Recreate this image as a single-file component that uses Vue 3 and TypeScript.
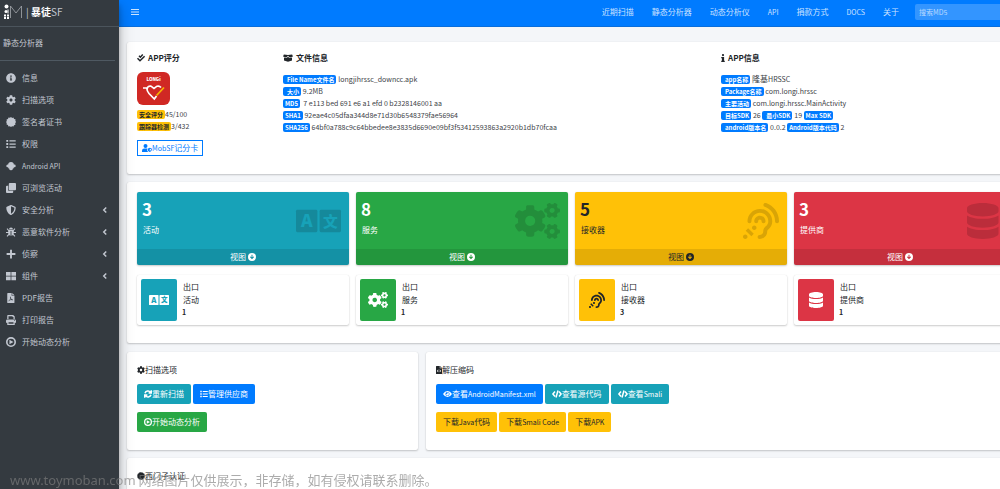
<script setup lang="ts">
import { h } from 'vue'

type Glyph = { box: string; d: string; stroke?: number }

const gear =
  'M512.1 191l-8.2 14.3c-3 5.3-9.4 7.5-15.1 5.4-11.8-4.4-22.6-10.7-32.1-18.6-4.6-3.8-5.8-10.5-2.8-15.7l8.2-14.3c-6.9-8-12.3-17.3-15.9-27.4h-16.5c-6 0-11.2-4.3-12.2-10.3-2-12-2.1-24.6 0-37.1 1-6 6.2-10.4 12.2-10.4h16.5c3.6-10.1 9-19.4 15.9-27.4l-8.2-14.3c-3-5.2-1.9-11.9 2.8-15.7 9.5-7.9 20.4-14.2 32.1-18.6 5.7-2.1 12.1.1 15.1 5.4l8.2 14.3c10.5-1.9 21.2-1.9 31.7 0L552 6.3c3-5.3 9.4-7.5 15.1-5.4 11.8 4.4 22.6 10.7 32.1 18.6 4.6 3.8 5.8 10.5 2.8 15.7l-8.2 14.3c6.9 8 12.3 17.3 15.9 27.4h16.5c6 0 11.2 4.3 12.2 10.3 2 12 2.1 24.6 0 37.1-1 6-6.2 10.4-12.2 10.4h-16.5c-3.6 10.1-9 19.4-15.9 27.4l8.2 14.3c3 5.2 1.9 11.9-2.8 15.7-9.5 7.9-20.4 14.2-32.1 18.6-5.7 2.1-12.1-.1-15.1-5.4l-8.2-14.3c-10.4 1.9-21.2 1.9-31.7 0zm-10.5-58.8c38.5 29.6 82.4-14.3 52.8-52.8-38.5-29.7-82.4 14.3-52.8 52.8z'
const bigGear =
  'M386.3 286.1l33.7 16.8c10.1 5.8 14.5 18.1 10.5 29.1-8.9 24.2-26.4 46.4-42.6 65.8-7.4 8.9-20.2 11.1-30.3 5.3l-29.1-16.8c-16 13.7-34.6 24.6-54.9 31.7v33.6c0 11.6-8.3 21.6-19.7 23.6-24.6 4.2-50.4 4.4-75.9 0-11.5-2-20-11.9-20-23.6V418c-20.3-7.2-38.9-18-54.9-31.7L74 403c-10 5.8-22.9 3.6-30.3-5.3-16.2-19.4-33.3-41.6-42.2-65.7-4-10.9.4-23.2 10.5-29.1l33.3-16.8c-3.9-20.9-3.9-42.4 0-63.4L12 205.8c-10.1-5.8-14.6-18.1-10.5-29 8.9-24.2 26-46.4 42.2-65.8 7.4-8.9 20.2-11.1 30.3-5.3l29.1 16.8c16-13.7 34.6-24.6 54.9-31.7V57.1c0-11.5 8.2-21.5 19.6-23.5 24.6-4.2 50.5-4.4 76-.1 11.5 2 20 11.9 20 23.6v33.6c20.3 7.2 38.9 18 54.9 31.7l29.1-16.8c10-5.8 22.9-3.6 30.3 5.3 16.2 19.4 33.2 41.6 42.1 65.8 4 10.9.1 23.2-10 29.1l-33.7 16.8c3.9 21 3.9 42.5 0 63.5zm-117.6 21.1c59.2-77-28.7-164.9-105.7-105.7-59.2 77 28.7 164.9 105.7 105.7z'

const glyphs: Record<string, Glyph> = {
  info: { box: '0 0 512 512', d: 'M256 8C119 8 8 119 8 256s111 248 248 248 248-111 248-248S393 8 256 8zm0 110c23.2 0 42 18.8 42 42s-18.8 42-42 42-42-18.8-42-42 18.8-42 42-42zm56 254c0 6.6-5.4 12-12 12h-88c-6.6 0-12-5.4-12-12v-24c0-6.6 5.4-12 12-12h12v-64h-12c-6.6 0-12-5.4-12-12v-24c0-6.6 5.4-12 12-12h64c6.6 0 12 5.4 12 12v100h12c6.6 0 12 5.4 12 12v24z' },
  cog: { box: '0 0 512 512', d: 'M487.4 315.7l-42.6-24.6c4.3-23.2 4.3-47 0-70.2l42.6-24.6c4.9-2.8 7.1-8.6 5.5-14-11.1-35.6-30-67.8-54.7-94.6-3.8-4.1-10-5.1-14.8-2.3L380.8 110c-17.9-15.4-38.5-27.3-60.8-35.1V25.8c0-5.6-3.9-10.5-9.4-11.7-36.7-8.2-74.3-7.8-109.2 0-5.5 1.2-9.4 6.1-9.4 11.7V75c-22.2 7.9-42.8 19.8-60.8 35.1L88.7 85.5c-4.9-2.8-11-1.9-14.8 2.3-24.7 26.7-43.6 58.9-54.7 94.6-1.7 5.4.6 11.2 5.5 14L67.3 221c-4.3 23.2-4.3 47 0 70.2l-42.6 24.6c-4.9 2.8-7.1 8.6-5.5 14 11.1 35.6 30 67.8 54.7 94.6 3.8 4.1 10 5.1 14.8 2.3l42.6-24.6c17.9 15.4 38.5 27.3 60.8 35.1v49.2c0 5.6 3.9 10.5 9.4 11.7 36.7 8.2 74.3 7.8 109.2 0 5.5-1.2 9.4-6.1 9.4-11.7v-49.2c22.2-7.9 42.8-19.8 60.8-35.1l42.6 24.6c4.9 2.8 11 1.9 14.8-2.3 24.7-26.7 43.6-58.9 54.7-94.6 1.5-5.5-.7-11.3-5.6-14.1zM256 336c-44.1 0-80-35.9-80-80s35.9-80 80-80 80 35.9 80 80-35.9 80-80 80z' },
  cogs: { box: '0 0 640 512', d: gear + bigGear + gear.replace('M512.1 191', 'M512.1 489.9').replace('L552 6.3', 'L552 305.2') },
  certificate: { box: '0 0 16 16', d: 'M8 0l1.8 1.5L11.9.9l1 2.1 2.3.7-.2 2.3L16 8l-1.3 1.9.4 2.3-2.2.8-.9 2.2-2.3-.3L8 16l-1.8-1.300-2.300.4-.8-2.200-2.200-.900.3-2.300L0 8l1.300-1.800-.4-2.300 2.200-.8.9-2.200 2.300.3z' },
  list: { box: '0 0 16 16', d: 'M.5 1.5h3v3h-3zM5.5 2h10v2h-10zM.5 6.5h3v3h-3zM5.5 7h10v2h-10zM.5 11.5h3v3h-3zM5.5 12h10v2h-10z' },
  android: { box: '0 0 16 16', d: 'M3.500 5.500Q3.500 1.500 8 1.500T12.500 5.500H13.500Q15.500 5.500 15.500 7.800T13.500 10H12.700Q12.700 12.200 10.700 12.200V13Q10.700 14.700 8 14.700T5.300 13V12.200Q3.300 12.200 3.300 10H2.500Q.5 10 .5 7.800T2.500 5.500z' },
  clone: { box: '0 0 16 16', d: 'M6 0h8.500Q16 0 16 1.500V10q0 1.500-1.500 1.500H6Q4.500 11.500 4.500 10V1.500Q4.500 0 6 0zM1.500 4.500h2V11q0 1.500 1.500 1.500h6.500v2Q11.500 16 10 16H1.500Q0 16 0 14.500V6Q0 4.500 1.500 4.500z' },
  shield: { box: '0 0 512 512', d: 'M466.500 83.700l-192-80a48.150 48.150 0 0 0-36.900 0l-192 80C27.700 91.100 16 108.600 16 128c0 198.500 114.500 335.700 221.500 380.300 11.800 4.900 25.100 4.900 36.900 0C360.100 472.600 496 349.300 496 128c0-19.400-11.700-36.900-29.500-44.300zM256.100 446.300l-.1-381 175.900 73.300c-3.300 151.400-82.100 261.100-175.800 307.700z' },
  bug: { box: '0 0 16 16', d: 'M4.800 3.800a3.200 3.200 0 0 1 6.400 0zM1 3.200L2.200 2l2.500 2.600h6.600L13.800 2 15 3.200l-2.500 2.600v2H16v1.700h-3.500q0 1-.4 1.800l2.900 2.900-1.200 1.200-2.700-2.600q-1 .9-2.400 1.100V6.500H7.300v7.400q-1.400-.2-2.400-1.100l-2.700 2.600L1 14.200l2.900-2.900q-.4-.8-.4-1.800H0V7.800h3.500v-2z' },
  plus: { box: '0 0 16 16', d: 'M6.500 1h3v5.500H15v3H9.500V15h-3V9.500H1v-3h5.500z' },
  grid: { box: '0 0 16 16', d: 'M0 1.500h7.400v6H0zM8.600 1.500H16v6H8.600zM0 8.600h7.400v6H0zM8.600 8.600H16v6H8.600z' },
  pdf: { box: '0 0 16 16', d: 'M2 1q0-1 1-1h6v4.500h4.500V15q0 1-1 1H3q-1 0-1-1zM10 0l3.500 3.500H10zM7 5.500Q6.200 6 7 8.200 6.300 10 5.300 11.400q-2 1-1.300 1.800 1 .5 2-1.500l2.500-.7q2 1 2.800.3.300-1.300-2-1.300Q8.300 9.300 7.900 8q.6-2.300-.9-2.500zM7.500 9l.9 1.200-1.700.5z' },
  print: { box: '0 0 16 16', d: 'M2 1q0-1 1-1h8.500L14 2.500V6.500h-2V3.300h-1.500V2H4v4.500H2zM2 7h12q2 0 2 2v3.500h-2V16H2v-3.500H0V9q0-2 2-2zM4 11.500V14h8v-2.500zM13 8.400v1.200h1.200V8.400z' },
  play: { box: '0 0 16 16', d: 'M8 0a8 8 0 1 0 0 16A8 8 0 1 0 8 0zM8 2.600a5.400 5.400 0 1 1 0 10.800A5.400 5.400 0 1 1 8 2.600zM5.500 4.300v7.400L12 8z' },
  left: { box: '0 0 16 16', d: 'M10.500 3L5.500 8l5 5', stroke: 3 },
  bars: { box: '0 0 16 16', d: 'M0 3h16M0 8h16M0 13h16', stroke: 2 },
  checks: { box: '0 0 16 16', d: 'M4 3.500l2.700 2.800L11.500 1M1 8.500L6 13.500 15.200 4.500', stroke: 3 },
  boxOpen: { box: '0 0 20 16', d: 'M1.800 1L10 2.200 18.200 1 20 5l-6.500 1.800L10 3.300 6.500 6.800 0 5zM2 6.800l5.200 1.400L10 5.300l2.800 2.900L18 6.800v6.400L10 15.500 2 13.200z' },
  infoMark: { box: '0 0 8 16', d: 'M4 0a2.200 2.200 0 1 1 0 4.400A2.200 2.200 0 1 1 4 0zM.5 5.800h5.700v7.500h1.300V16H.5v-2.700h1.300V8.500H.5z' },
  userShield: { box: '0 0 20 16', d: 'M7 0a4 4 0 1 1 0 8A4 4 0 1 1 7 0zM0 16v-2.500Q0 9 4.500 9h5.700v2.500q0 3 2.300 4.500zM15.500 7.500L20 9.300q0 4.700-4.500 6.700Q11 14 11 9.300zM15.500 9.300v4.900q2.600-1.500 2.800-3.900z' },
  sync: { box: '0 0 16 16', d: 'M2 6.500a6.200 6.200 0 0 1 11-1.800M14.500.5v5.400H9.200M14 9.500a6.200 6.200 0 0 1-11 1.800M1.500 15.500v-5.400h5.300', stroke: 3 },
  eye: { box: '0 0 18 16', d: 'M9 2q5.500 0 9 6-3.500 6-9 6T0 8q3.500-6 9-6zM9 3.800a4.200 4.200 0 1 0 0 8.400 4.200 4.200 0 1 0 0-8.400zM9 5.200A2.800 2.800 0 1 1 6.300 7.500 1.300 1.300 0 0 0 8.500 5.300z' },
  code: { box: '0 0 20 16', d: 'M6 3L1.800 8 6 13M14 3l4.200 5L14 13M12 1L8 15', stroke: 3 },
  fileCode: { box: '0 0 12 16', d: 'M0 1q0-1 1-1h6.500v4.500H12V15q0 1-1 1H1q-1 0-1-1zM8.500 0L12 3.500H8.500zM4.200 7L1.800 9.800l2.400 2.800 1-1-1.600-1.800 1.600-1.800zM7.800 7l-1 1 1.600 1.800-1.600 1.800 1 1 2.400-2.800z' },
  down: { box: '0 0 16 16', d: 'M8 0a8 8 0 1 0 0 16A8 8 0 1 0 8 0zM7 3.500h2v5.200l2-1.900 1.300 1.300L8 12.500 3.700 8.100 5 6.800l2 1.900z' },
  ear: { box: '0 0 512 512', d: 'M216 260c0 15.464-12.536 28-28 28s-28-12.536-28-28c0-44.112 35.888-80 80-80s80 35.888 80 80c0 15.464-12.536 28-28 28s-28-12.536-28-28c0-13.234-10.767-24-24-24s-24 10.766-24 24zm24-176c-97.047 0-176 78.953-176 176 0 15.464 12.536 28 28 28s28-12.536 28-28c0-66.168 53.832-120 120-120s120 53.832 120 120c0 75.164-71.009 70.311-71.997 143.622L288 404c0 28.673-23.327 52-52 52-15.464 0-28 12.536-28 28s12.536 28 28 28c59.475 0 107.876-48.328 108-107.774.595-34.428 72-48.24 72-144.226 0-97.047-78.953-176-176-176zm-80 236c-17.673 0-32 14.327-32 32s14.327 32 32 32 32-14.327 32-32-14.327-32-32-32zM32 448c-17.673 0-32 14.327-32 32s14.327 32 32 32 32-14.327 32-32-14.327-32-32-32zm480-187.993c0-1.518-.012-3.025-.045-4.531C510.076 140.525 436.157 38.47 327.994 1.511c-14.633-4.998-30.549 2.809-35.55 17.442-5 14.633 2.81 30.549 17.442 35.55 85.906 29.354 144.61 110.513 146.077 201.953l.003.188c.026 1.118.033 2.236.033 3.363 0 15.464 12.536 28 28 28s28.001-12.536 28.001-28zM152.971 439.029l-80-80L39.03 392.97l80 80 33.941-33.941z' },
  database: { box: '0 0 448 512', d: 'M448 73.143v45.714C448 159.143 347.667 192 224 192S0 159.143 0 118.857V73.143C0 32.857 100.333 0 224 0s224 32.857 224 73.143zM448 176v102.857C448 319.143 347.667 352 224 352S0 319.143 0 278.857V176c48.125 33.143 136.208 48.572 224 48.572S399.874 209.143 448 176zm0 160v102.857C448 479.143 347.667 512 224 512S0 479.143 0 438.857V336c48.125 33.143 136.208 48.572 224 48.572S399.874 369.143 448 336z' },
}

const Icon = (props: { name: string }) => {
  const attrs = { viewBox: '0 0 640 512', class: 'icon', 'aria-hidden': 'true' }
  if (props.name === 'language') {
    const word = { fill: 'var(--tone)', 'font-weight': 900, 'text-anchor': 'middle' }
    return h('svg', attrs, [
      h('rect', { x: 0, y: 96, width: 304, height: 320, rx: 20 }),
      h('rect', { x: 336, y: 96, width: 304, height: 320, rx: 20 }),
      h('text', { ...word, 'font-size': 250, x: 152, y: 348 }, 'A'),
      h('text', { ...word, 'font-size': 210, x: 488, y: 335 }, '文'),
    ])
  }
  const g = glyphs[props.name]
  const paint = g.stroke
    ? { fill: 'none', stroke: 'currentColor', 'stroke-width': g.stroke }
    : { 'fill-rule': 'evenodd' }
  return h('svg', { ...attrs, viewBox: g.box }, [h('path', { d: g.d, ...paint })])
}
Icon.props = ['name']

const menu = [
  { icon: 'info', text: '信息' },
  { icon: 'cog', text: '扫描选项' },
  { icon: 'certificate', text: '签名者证书' },
  { icon: 'list', text: '权限' },
  { icon: 'android', text: 'Android API', latin: true },
  { icon: 'clone', text: '可浏览活动' },
  { icon: 'shield', text: '安全分析', more: true },
  { icon: 'bug', text: '恶意软件分析', more: true },
  { icon: 'plus', text: '侦察', more: true },
  { icon: 'grid', text: '组件', more: true },
  { icon: 'pdf', text: 'PDF报告' },
  { icon: 'print', text: '打印报告' },
  { icon: 'play', text: '开始动态分析' },
]
const links = [
  { text: '近期扫描' },
  { text: '静态分析器' },
  { text: '动态分析仪' },
  { text: 'API', latin: true },
  { text: '捐款方式' },
  { text: 'DOCS', latin: true },
  { text: '关于' },
]
const fileRows = [
  { label: 'File Name文件名', value: 'longjihrssc_downcc.apk', wide: true },
  { label: '大小', value: '9.2MB', wide: true },
  { label: 'MD5', value: '\u00a07 e113 bed 691 e6 a1 efd 0 b2328146001 aa' },
  { label: 'SHA1', value: '92eae4c05dfaa344d8e71d30b6548379fae56964' },
  { label: 'SHA256', value: '64bf0a788c9c64bbedee8e3835d6690e09bf3f53412593863a2920b1db70fcaa' },
]
const appRows = [
  [{ label: 'app名称', han: '隆基', value: 'HRSSC', wide: true }],
  [{ label: 'Package名称', value: 'com.longi.hrssc', wide: true }],
  [{ label: '主要活动', value: 'com.longi.hrssc.MainActivity', wide: true }],
  [{ label: '目标SDK', value: '26', wide: true }, { label: '最小SDK', value: '19', wide: true }, { label: 'Max SDK', value: '' }],
  [{ label: 'android版本名', value: '0.0.2', wide: true }, { label: 'Android版本代码', value: '2' }],
]
const stats = [
  { tone: 'info', icon: 'language', count: 3, text: '活动', exported: 1 },
  { tone: 'success', icon: 'cogs', count: 8, text: '服务', exported: 1 },
  { tone: 'warning', icon: 'ear', count: 5, text: '接收器', exported: 3 },
  { tone: 'danger', icon: 'database', count: 3, text: '提供商', exported: 1 },
]
</script>

<template>
  <div class="shell">
    <aside class="sidebar">
      <a href="#" class="brand">
        <svg class="logo" viewBox="0 0 18 16" aria-hidden="true">
          <g fill="#fff">
            <circle cx="2.5" cy="2.5" r="2" /><circle cx="2" cy="7.5" r="1.5" />
            <rect x="0" y="10.5" width="2" height="2" /><rect x="3" y="10.5" width="2" height="2" />
            <rect x="0" y="13" width="2" height="2" /><rect x="3" y="13" width="2" height="2" />
            <rect x="3.5" y="5.5" width="1" height="4" />
          </g>
          <path d="M6.500 14V2l5.500 7 5.500-7v12" fill="none" stroke="#a5a8ad" stroke-width=".8" />
        </svg>
        <span>| <b>暴徒</b>SF</span>
      </a>
      <div class="panel">静态分析器</div>
      <nav class="menu">
        <a v-for="m in menu" :key="m.text" href="#">
          <Icon :name="m.icon" />
          <span :class="{ en: m.latin }">{{ m.text }}</span>
          <Icon v-if="m.more" name="left" class="more" />
        </a>
      </nav>
    </aside>

    <div class="page">
      <header class="topbar">
        <button type="button" class="toggle" aria-label="菜单"><Icon name="bars" /></button>
        <nav class="links">
          <a v-for="l in links" :key="l.text" href="#" :class="{ en: l.latin }">{{ l.text }}</a>
        </nav>
        <input type="search" placeholder="搜索MD5" aria-label="搜索MD5" />
      </header>

      <main class="content">
        <section class="card summary">
          <div class="score">
            <h5><Icon name="checks" />APP评分</h5>
            <svg class="app" viewBox="0 0 33 33" role="img" aria-label="LONGI">
              <rect width="33" height="33" rx="6" fill="#d02824" />
              <text x="16.5" y="9" text-anchor="middle" font-size="4.5" font-weight="900" fill="#fff">LONGi</text>
              <g fill="none" stroke-width="1.7">
                <path d="M6 16h4.500M10 17.500L10.500 15.500Q11.500 13.700 14 14.200L17 16.500 20 14.200Q22.500 13.500 24 15.500M9.800 16.500Q10 19 12 21.500L17.300 27 19.500 24" stroke="#fff" />
                <path d="M27 15.500L19.500 23.500" stroke="#f7b500" />
              </g>
            </svg>
            <p><span class="badge amber">安全评分</span><span class="en">45/100</span></p>
            <p><span class="badge amber">跟踪器检测</span><span class="en">3/432</span></p>
            <button type="button" class="outline"><Icon name="userShield" /><span class="en">MobSF</span>记分卡</button>
          </div>
          <div class="file">
            <h5><Icon name="boxOpen" />文件信息</h5>
            <div class="rows">
              <p v-for="r in fileRows" :key="r.label">
                <span class="badge" :class="{ wide: r.wide }">{{ r.label }}</span> <span class="en">{{ r.value }}</span>
              </p>
            </div>
          </div>
          <div class="about">
            <h5><Icon name="infoMark" />APP信息</h5>
            <div class="rows">
              <p v-for="(row, i) in appRows" :key="i">
                <template v-for="r in row" :key="r.label">
                  <span class="badge" :class="{ wide: r.wide }">{{ r.label }}</span> {{ r.han }}<span class="en">{{ r.value + ' ' }}</span>
                </template>
              </p>
            </div>
          </div>
        </section>

        <section class="card stats">
          <div v-for="s in stats" :key="s.icon" class="stat" :class="s.tone">
            <div class="inner">
              <div><h3>{{ s.count }}</h3><p>{{ s.text }}</p></div>
              <Icon :name="s.icon" />
            </div>
            <a href="#">视图 <Icon name="down" /></a>
          </div>
          <div v-for="s in stats" :key="s.tone" class="mini" :class="s.tone">
            <span class="tile"><Icon :name="s.icon" /></span>
            <div><p>出口</p><p>{{ s.text }}</p><b>{{ s.exported }}</b></div>
          </div>
        </section>

        <div class="pair">
          <section class="card tools">
            <h6><Icon name="cog" />扫描选项</h6>
            <div class="buttons">
              <button type="button" class="info"><Icon name="sync" />重新扫描</button>
              <button type="button" class="primary"><Icon name="list" />管理供应商</button>
            </div>
            <div class="buttons">
              <button type="button" class="success"><Icon name="play" />开始动态分析</button>
            </div>
          </section>
          <section class="card tools">
            <h6><Icon name="fileCode" />解压缩码</h6>
            <div class="buttons">
              <button type="button" class="primary"><Icon name="eye" />查看<span class="en">AndroidManifest.xml</span></button>
              <button type="button" class="info"><Icon name="code" />查看源代码</button>
              <button type="button" class="info"><Icon name="code" />查看<span class="en">Smali</span></button>
            </div>
            <div class="buttons">
              <button type="button" class="warning">下载<span class="en">Java</span>代码</button>
              <button type="button" class="warning">下载<span class="en">Smali Code</span></button>
              <button type="button" class="warning">下载<span class="en">APK</span></button>
            </div>
          </section>
        </div>

        <section class="card tools">
          <h6><Icon name="certificate" />西门子认证</h6>
        </section>
      </main>
    </div>
    <div class="watermark"><span>www.toymoban.com</span> 网络图片仅供展示，非存储，如有侵权请联系删除。</div>
  </div>
</template>

<style>
body { margin: 0; background: #f4f6f9; overflow: hidden; }
</style>

<style scoped>
.shell {
  display: flex;
  height: 100vh;
  overflow: hidden;
  font: 8px/12px "Noto Sans CJK SC", "Noto Sans", sans-serif;
  color: #212529;
}
.shell * { box-sizing: border-box; }
a { color: inherit; text-decoration: none; }
p, h3, h5, h6 { margin: 0; }
button, input { font: inherit; margin: 0; }
.en { font-size: 7px; }
.icon { height: 8px; fill: currentColor; flex: none; overflow: visible; }

.sidebar {
  flex: 0 0 119px;
  background: #343a40;
  color: #c2c7d0;
  box-shadow: 0 7px 14px rgba(0, 0, 0, .25), 0 5px 5px rgba(0, 0, 0, .22);
  z-index: 2;
}
.brand {
  display: flex;
  align-items: center;
  gap: 4px;
  height: 27px;
  padding: 0 4px 3px;
  border-bottom: 1px solid #4b545c;
  font-size: 10px;
}
.brand b { color: #fff; }
.logo { width: 18px; height: 16px; }
.panel {
  margin-right: 4px;
  padding: 10px 3px;
  height: 34px;
  border-bottom: 1px solid #4f5962;
}
.menu { padding-top: 6px; }
.menu a { display: flex; align-items: center; height: 22px; padding: 0 10px 0 6px; gap: 6px; }
.menu .icon { width: 10px; height: 10px; }
.menu .more { margin-left: auto; width: 8px; height: 8px; }

.page { flex: 1; min-width: 0; margin-right: -16px; }
.topbar {
  display: flex;
  align-items: center;
  height: 27px;
  padding-bottom: 2px;
  background: #007bff;
  border-bottom: 1px solid #0a6edb;
  color: rgba(255, 255, 255, .8);
}
.toggle { display: flex; padding: 0; margin-left: 12px; background: none; border: 0; color: inherit; }
.links { display: flex; gap: 18px; margin-left: auto; margin-right: 16px; }
.topbar input {
  width: 101px;
  height: 16px;
  padding: 0 4px;
  border: 0;
  border-radius: 2px;
  background: rgba(255, 255, 255, .2);
  font-size: 7px;
  color: #fff;
}
.topbar input::placeholder { color: rgba(255, 255, 255, .65); }

.content { display: grid; gap: 8px; padding: 15px 0 0 8px; }
.card {
  background: #fff;
  border-radius: 2px;
  box-shadow: 0 0 1px rgba(0, 0, 0, .13), 0 1px 2px rgba(0, 0, 0, .2);
}
.summary {
  display: grid;
  grid-template-columns: repeat(12, 1fr);
  column-gap: 7px;
  padding: 10px 10px 18px;
  color: #3c4146;
}
.summary p { white-space: nowrap; height: 12px; }
.score { grid-column: span 2; }
.file { grid-column: span 6; }
.about { grid-column: span 4; }
h5 { display: flex; align-items: center; gap: 3px; font-size: 8px; font-weight: 700; color: #212529; margin-bottom: 8px; }
.app { display: block; width: 33px; height: 33px; margin-bottom: 3px; }
.rows { padding-top: 1px; }
.badge {
  display: inline-block;
  padding: 0 2px;
  border-radius: 2px;
  background: #007bff;
  color: #fff;
  font-size: 6px;
  font-weight: 700;
  line-height: 9px;
}
.wide { padding-left: 4px; }
.amber { background: #ffc107; color: #212529; }
.outline {
  display: flex;
  align-items: center;
  height: 16px;
  margin-top: 8px;
  padding: 0 4px;
  border: 1px solid #007bff;
  background: #fff;
  color: #007bff;
  white-space: nowrap;
}

.stats {
  display: grid;
  grid-template-columns: repeat(4, 1fr);
  gap: 10px 7px;
  padding: 10px 10px 18px;
}
.info { --tone: #17a2b8; --shade: #15899b; --ink: #fff; }
.success { --tone: #28a745; --shade: #238e3b; --ink: #fff; }
.warning { --tone: #ffc107; --shade: #d9a406; --ink: #212529; }
.danger { --tone: #dc3545; --shade: #bb2d3b; --ink: #fff; }
.primary { --tone: #007bff; --ink: #fff; }
.stat {
  border-radius: 2px;
  overflow: hidden;
  background: var(--tone);
  color: var(--ink);
  box-shadow: 0 0 1px rgba(0, 0, 0, .13), 0 1px 2px rgba(0, 0, 0, .2);
}
.inner { display: flex; justify-content: space-between; align-items: center; height: 57px; padding: 0 8px 0 5px; }
.inner > div { padding-bottom: 6px; }
.inner .icon { height: 36px; color: var(--shade); }
.stat h3 { font-size: 17px; line-height: 24px; font-weight: 700; }
.stat p { padding: 3px 1px; }
.stat a { display: flex; justify-content: center; align-items: center; gap: 2px; height: 16px; background: rgba(0, 0, 0, .1); }
.mini {
  display: flex;
  gap: 5px;
  height: 50px;
  padding: 4px;
  border-radius: 2px;
  box-shadow: 0 0 1px rgba(0, 0, 0, .13), 0 1px 2px rgba(0, 0, 0, .2);
}
.tile {
  display: flex;
  align-items: center;
  justify-content: center;
  width: 36px;
  border-radius: 2px;
  background: var(--tone);
  color: var(--ink);
}
.tile .icon { height: 16px; }
.mini p { line-height: 13px; padding-left: 1px; }
.mini div { padding-top: 1px; }
.mini b { display: block; font-size: 7px; line-height: 12px; }

.pair { display: grid; grid-template-columns: repeat(12, 1fr); gap: 8px; padding-top: 1px; }
.pair .card:first-child { grid-column: span 4; }
.pair .card:last-child { grid-column: span 8; }
.tools { padding: 12px 10px 18px; }
h6 { display: flex; align-items: center; font-size: 8px; font-weight: 400; }
.buttons { display: flex; gap: 2px; margin-top: 8px; }
.buttons button {
  display: flex;
  align-items: center;
  height: 20px;
  padding: 0 7px;
  border: 0;
  border-radius: 2px;
  background: var(--tone);
  color: var(--ink);
  white-space: nowrap;
}

.watermark {
  position: fixed;
  left: 10px;
  bottom: 0;
  z-index: 3;
  font-size: 13px;
  line-height: 18px;
  color: rgba(128, 128, 128, .65);
  white-space: nowrap;
  pointer-events: none;
}
.watermark span { font-family: "Noto Sans", sans-serif; }
</style>
